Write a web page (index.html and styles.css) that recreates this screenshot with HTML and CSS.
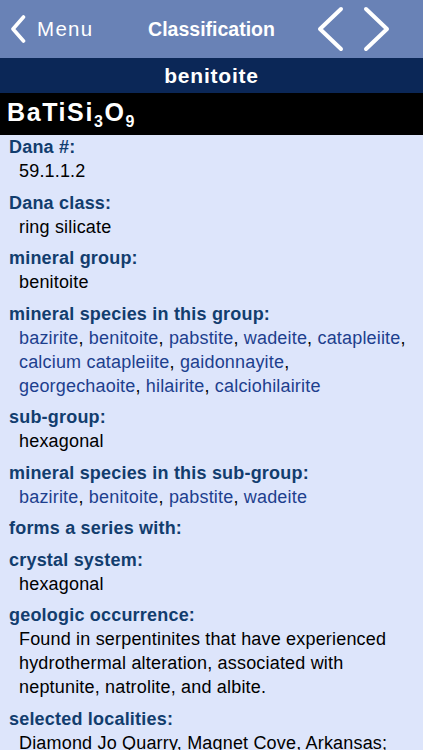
FILE: index.html
```html
<!DOCTYPE html>
<html>
<head>
<meta charset="utf-8">
<link rel="stylesheet" href="styles.css">
</head>
<body>
<div class="nav">
  <div class="back">
    <svg class="back-chev" width="16" height="28" viewBox="0 0 16 28"><path d="M13.5 2 L3 14 L13.5 26" fill="none" stroke="#fff" stroke-width="3.6" stroke-linecap="round" stroke-linejoin="round"/></svg>
    <span class="back-text">Menu</span>
  </div>
  <div class="nav-title">Classification</div>
  <div class="arrows">
    <svg width="30" height="46" viewBox="0 0 30 46"><path d="M26 3 L5 23 L26 43" fill="none" stroke="#fff" stroke-width="4" stroke-linecap="round" stroke-linejoin="round"/></svg>
    <svg width="30" height="46" viewBox="0 0 30 46"><path d="M4 3 L25 23 L4 43" fill="none" stroke="#fff" stroke-width="4" stroke-linecap="round" stroke-linejoin="round"/></svg>
  </div>
</div>
<div class="name-bar">benitoite</div>
<div class="formula-bar">BaTiSi<sub>3</sub>O<sub>9</sub></div>
<div class="content">
  <div class="sec"><div class="label">Dana #:</div><div class="val">59.1.1.2</div></div>
  <div class="sec"><div class="label">Dana class:</div><div class="val">ring silicate</div></div>
  <div class="sec"><div class="label">mineral group:</div><div class="val">benitoite</div></div>
  <div class="sec"><div class="label">mineral species in this group:</div><div class="val"><span class="ln"><span class="link">bazirite</span>, <span class="link">benitoite</span>, <span class="link">pabstite</span>, <span class="link">wadeite</span>, <span class="link">catapleiite</span>,</span> <span class="ln"><span class="link">calcium catapleiite</span>, <span class="link">gaidonnayite</span>,</span> <span class="ln"><span class="link">georgechaoite</span>, <span class="link">hilairite</span>, <span class="link">calciohilairite</span></span></div></div>
  <div class="sec"><div class="label">sub-group:</div><div class="val">hexagonal</div></div>
  <div class="sec"><div class="label">mineral species in this sub-group:</div><div class="val"><span class="link">bazirite</span>, <span class="link">benitoite</span>, <span class="link">pabstite</span>, <span class="link">wadeite</span></div></div>
  <div class="sec"><div class="label">forms a series with:</div></div>
  <div class="sec"><div class="label">crystal system:</div><div class="val">hexagonal</div></div>
  <div class="sec"><div class="label">geologic occurrence:</div><div class="val"><span class="ln">Found in serpentinites that have experienced</span> <span class="ln">hydrothermal alteration, associated with</span> <span class="ln">neptunite, natrolite, and albite.</span></div></div>
  <div class="sec"><div class="label">selected localities:</div><div class="val"><span class="ln">Diamond Jo Quarry, Magnet Cove, Arkansas;</span></div></div>
</div>
</body>
</html>
```
FILE: styles.css
```css
html, body {
  margin: 0;
  padding: 0;
  background: #dde5fb;
  font-family: "Liberation Sans", Arial, sans-serif;
  overflow: hidden;
}
.nav {
  height: 58px;
  background: #6982b6;
  display: flex;
  align-items: center;
  color: #fff;
}
.back {
  display: flex;
  align-items: center;
  width: 140px;
  padding-left: 10px;
  box-sizing: border-box;
}
.back-chev {
  display: block;
  margin-right: 11px;
}
.back-text {
  font-size: 20.5px;
  letter-spacing: 1.3px;
}
.nav-title {
  font-weight: bold;
  font-size: 19.5px;
  width: 143px;
  text-align: center;
}
.arrows {
  display: flex;
  gap: 17px;
  margin-left: 32px;
}
.arrows svg {
  display: block;
}
.name-bar {
  height: 35px;
  background: #0b2757;
  color: #fff;
  font-weight: bold;
  font-size: 21px;
  letter-spacing: 0.8px;
  display: flex;
  align-items: center;
  justify-content: center;
}
.formula-bar {
  height: 42px;
  background: #000;
  color: #fff;
  font-weight: bold;
  font-size: 25px;
  letter-spacing: 1.6px;
  padding-left: 7px;
  line-height: 38px;
}
.formula-bar sub {
  font-size: 16px;
  vertical-align: -6px;
  line-height: 0;
}
.content {
  padding: 0 0 0 9px;
}
.sec {
  margin-bottom: 7.5px;
}
.label {
  font-weight: bold;
  font-size: 18px;
  letter-spacing: 0.2px;
  line-height: 24px;
  color: #123d6e;
}
.val {
  font-size: 18px;
  letter-spacing: 0.18px;
  line-height: 24px;
  color: #000;
  padding-left: 10px;
}
.ln {
  display: block;
  white-space: nowrap;
}
.link {
  color: #1d3f8e;
}
```
